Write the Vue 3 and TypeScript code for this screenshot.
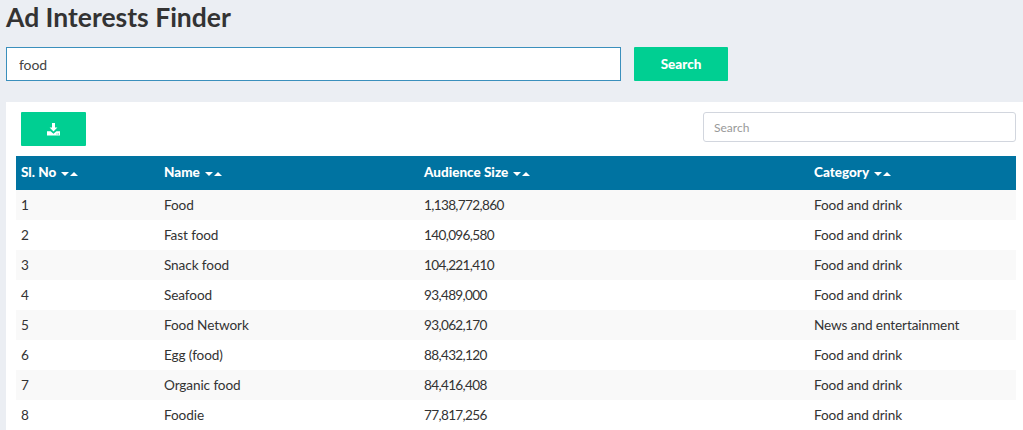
<script setup lang="ts">
interface Row { name: string; size: string; category: string }
const columns = ['Sl. No', 'Name', 'Audience Size', 'Category']
const rows: Row[] = [
  { name: 'Food', size: '1,138,772,860', category: 'Food and drink' },
  { name: 'Fast food', size: '140,096,580', category: 'Food and drink' },
  { name: 'Snack food', size: '104,221,410', category: 'Food and drink' },
  { name: 'Seafood', size: '93,489,000', category: 'Food and drink' },
  { name: 'Food Network', size: '93,062,170', category: 'News and entertainment' },
  { name: 'Egg (food)', size: '88,432,120', category: 'Food and drink' },
  { name: 'Organic food', size: '84,416,408', category: 'Food and drink' },
  { name: 'Foodie', size: '77,817,256', category: 'Food and drink' },
]
</script>

<template>
  <div class="page">
    <h1 class="title">Ad Interests Finder</h1>
    <div class="search-row">
      <input class="main-input" value="food" />
      <button class="btn search-btn">Search</button>
    </div>
    <section class="card">
      <div class="toolbar">
        <button class="btn dl-btn" aria-label="Download">
          <svg width="13" height="13" viewBox="0 0 13 13">
            <path fill="#fff" d="M5 0h3v4.5h2.4L6.5 8.4 2.6 4.5H5z" />
            <path fill="#fff" fill-rule="evenodd" d="M0 8.2h3.6l2.9 2.5 2.9-2.5H13V12.6H0zM9.6 10.6v.8h.8v-.8zM11.2 10.6v.8h.8v-.8z" />
          </svg>
        </button>
        <input class="table-search" placeholder="Search" />
      </div>
      <table class="table">
        <colgroup>
          <col class="c1" /><col class="c2" /><col class="c3" /><col class="c4" />
        </colgroup>
        <thead>
          <tr>
            <th v-for="c in columns" :key="c">
              {{ c }}<span class="sort"><i class="down"></i><i class="up"></i></span>
            </th>
          </tr>
        </thead>
        <tbody>
          <tr v-for="(r, i) in rows" :key="r.name">
            <td>{{ i + 1 }}</td>
            <td>{{ r.name }}</td>
            <td class="num">{{ r.size }}</td>
            <td>{{ r.category }}</td>
          </tr>
        </tbody>
      </table>
    </section>
  </div>
</template>

<style>
html, body { margin: 0; background: #ebeef3; overflow: hidden; }
</style>

<style scoped>
.page {
  height: 430px;
  overflow: hidden;
  padding-left: 6px;
  box-sizing: border-box;
  font-family: Lato, "Noto Sans", sans-serif;
  color: #333;
}
.title {
  margin: 0;
  padding: 1px 0 1px;
  font-size: 26.5px;
  line-height: 32px;
  font-weight: 700;
  color: #333;
}
.search-row {
  display: flex;
  gap: 13px;
  margin-top: 13px;
}
.main-input {
  width: 615px;
  height: 34px;
  box-sizing: border-box;
  border: 1px solid #3a8fbc;
  padding: 0 12px;
  font: 14px Lato, sans-serif;
  letter-spacing: -0.1px;
  color: #444;
  background: #fff;
  outline: none;
}
.btn {
  border: 0;
  background: #00cf92;
  color: #fff;
  border-radius: 1px;
  padding: 0;
  display: flex;
  align-items: center;
  justify-content: center;
}
.search-btn {
  width: 94px;
  height: 34px;
  font: 900 13.5px Lato, sans-serif;
}
.card {
  margin-top: 21px;
  background: #fff;
  height: 400px;
  padding: 10px 7px 0 10px;
}
.toolbar {
  display: flex;
  justify-content: space-between;
  padding-left: 5px;
  height: 34px;
}
.dl-btn { width: 65px; height: 34px; }
.table-search {
  width: 313px;
  height: 30px;
  box-sizing: border-box;
  border: 1px solid #d2d6de;
  border-radius: 3px;
  padding: 0 10px;
  font: 12px Lato, sans-serif;
  outline: none;
}
.table-search::placeholder { color: #999; opacity: 1; }
.table {
  margin-top: 10px;
  width: 1000px;
  border-collapse: collapse;
  table-layout: fixed;
  font-size: 13.6px;
  letter-spacing: -0.1px;
}
.c1 { width: 143px; }
.c2 { width: 260px; }
.c3 { width: 390px; }
th {
  height: 34px;
  padding: 0 5px 2px;
  box-sizing: border-box;
  background: #0073a1;
  color: #fff;
  text-align: left;
  font-size: 13.5px;
  font-weight: 900;
  letter-spacing: 0;
  white-space: nowrap;
}
td {
  height: 30px;
  padding: 0 5px;
  box-sizing: border-box;
  color: #333;
}
td.num { letter-spacing: -0.65px; }
tbody tr:nth-child(odd) { background: #f9f9f9; }
.sort {
  display: inline-flex;
  align-items: center;
  gap: 0;
  margin-left: 5px;
  vertical-align: middle;
}
.sort i {
  display: block;
  width: 0;
  height: 0;
  border-left: 4px solid transparent;
  border-right: 4px solid transparent;
}
.sort .down { border-top: 4px solid #fff; margin-right: 1px; }
.sort .up { border-bottom: 4px solid #fff; }
</style>
